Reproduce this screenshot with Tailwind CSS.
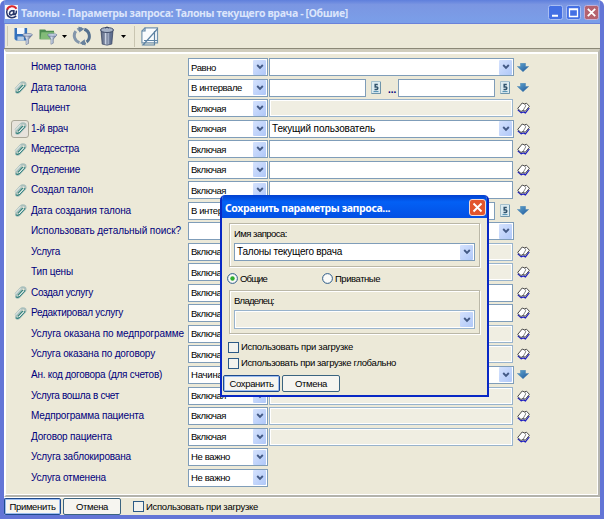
<!DOCTYPE html>
<html lang="ru">
<head>
<meta charset="utf-8">
<title>Талоны</title>
<script src="https://cdn.jsdelivr.net/npm/@tailwindcss/browser@4"></script>
</head>
<body class="w-[604px] h-[519px] overflow-hidden bg-white font-['Liberation_Sans',Arial,sans-serif] text-[9.5px] leading-none text-black">
<svg width="0" height="0" class="absolute">
  <defs>
    <linearGradient id="steel" x1="0" x2="1" y1="0" y2="0"><stop offset="0" stop-color="#3c4a68"/><stop offset=".4" stop-color="#d3dbea"/><stop offset="1" stop-color="#3e5078"/></linearGradient>
    <linearGradient id="down" x1="0" x2="1" y1="0" y2="1"><stop offset="0" stop-color="#5fa6cf"/><stop offset="1" stop-color="#22589c"/></linearGradient>
    <symbol id="chev" viewBox="0 0 7 6"><path d="M.7 1 3.5 3.8 6.3 1" fill="none" stroke="#435a85" stroke-width="1.9"/></symbol>
    <symbol id="arrow" viewBox="0 0 12 9"><path d="M3.5.3h5v3.2h3.2L6 8.8.3 3.5h3.2z" fill="url(#down)" stroke="#3a78ae" stroke-width=".4"/></symbol>
    <symbol id="book" viewBox="0 0 13 12">
      <path d="M.8 7.800 4.200 10.900 6.300 9.900 8.400 10.900 12.300 6" fill="none" stroke="#2020c0" stroke-width="1.200"/>
      <path d="M.7 6.500 5.200 1 7.500 1.900 9.500 1.200 12.400 4.300 8.200 9.300 6.200 8.300 4 9.500z" fill="#fff" stroke="#3a3a3a" stroke-width=".9"/>
      <path d="M7.500 1.900 8.800 3.800 6.200 8.300" fill="none" stroke="#666" stroke-width=".8"/>
    </symbol>
    <symbol id="cal" viewBox="0 0 10 13">
      <path d="M.5.5h9v12h-9z" fill="#dcebf0" stroke="#a5c0cc"/>
      <path d="M.5 12.500h9V1" fill="none" stroke="#6e94aa"/>
      <path d="M6.800 3.400H4.200v2.500h1.700c1.200 0 1.200 2.600-.2 2.600H3.500" fill="none" stroke="#31536c" stroke-width="1.500"/>
      <path d="M2.500 10.600h5" stroke="#4d8eb0" stroke-width="1"/>
    </symbol>
    <symbol id="clip" viewBox="0 0 12 12">
      <path d="M1.200 7.600 6.300 2.100C8 .3 11.400 1.600 10.400 4L5 10C3.500 11.600.9 10.400 2.300 8.400L7.200 3.200" fill="none" stroke="#a9bfbc" stroke-width="2"/>
      <path d="M1.800 9.800c1 1.200 2.400.8 3.300-.2L10.300 4.100M3.600 8.600 8.300 3.600" fill="none" stroke="#31827c" stroke-width="1.100"/>
      <path d="M1.500 7.300 6.400 2.200M4.700 9.200 9 4.600" fill="none" stroke="#fff" stroke-width=".8"/>
    </symbol>
    <symbol id="funnel" viewBox="0 0 11 13">
      <path d="M.5 1.800 4 6.600v5.600l2.600-1.300V6.600l3.900-4.800z" fill="url(#steel)" stroke="#53648a" stroke-width=".5"/>
      <ellipse cx="5.500" cy="1.900" rx="5" ry="1.500" fill="#c5d0e2" stroke="#5c6c94" stroke-width=".6"/>
    </symbol>
  </defs>
</svg>

<div class="relative flex flex-col w-[604px] h-[519px] rounded-t-[6px] overflow-hidden bg-[#ece9d8] border-x-4 border-b-4 border-[#6375d6] shadow-[inset_1px_0_0_#8796e0]">
  <header class="-mx-1 flex h-6 shrink-0 items-center bg-linear-to-b from-[#5f7fdc] via-[#7b96e2] via-20% to-[#7a9fe9] border-b border-[#6a82da] pl-[5px] pr-[5px]">
    <svg width="13" height="14" viewBox="0 0 13 14"><path d="M0 0h13v14H0z" fill="#f7f8fc"/><path d="M2 4.800C3.500.5 9-.2 11.500 3.800" fill="none" stroke="#d9262c" stroke-width="2"/><path d="M2.300 4.500C.5 8 2.500 12.800 7 12.700c2 0 3.200-.8 4.200-1.800M4.500 8.600c.2-3 4-4 4.200-1.300.2 2.600-4 4-4.200 1.300zM8.900 5v4.600c2.200 0 2.600-2 2.400-4" fill="none" stroke="#263569" stroke-width="1.500"/></svg>
    <h1 data-w="327" data-font="bold 10.5px 'Noto Sans'" class="ml-[3px] whitespace-nowrap font-['Noto_Sans',sans-serif] text-[10.5px] leading-none font-bold text-[#dce5fb] mt-[3px]">Талоны - Параметры запроса: Талоны текущего врача - [Обшие]</h1>
    <div class="ml-auto mt-[2px] flex gap-[3px]">
      <svg width="15" height="15" viewBox="0 0 15 15"><rect x=".5" y=".5" width="14" height="14" rx="2" fill="#4470e4" stroke="#a9bef3"/><path d="M4 10.700h6" stroke="#fff" stroke-width="2"/></svg>
      <svg width="15" height="15" viewBox="0 0 15 15"><rect x=".5" y=".5" width="14" height="14" rx="2" fill="#4470e4" stroke="#a9bef3"/><path d="M3.500 4h8v7.500h-8zM3.500 4.700h8" fill="none" stroke="#fff" stroke-width="1.300"/></svg>
      <svg width="15" height="15" viewBox="0 0 15 15"><rect x=".5" y=".5" width="14" height="14" rx="2" fill="#b5626f" stroke="#c3aed6"/><path d="m3.800 3.800 7.400 7.400m0-7.400-7.400 7.400" stroke="#fff" stroke-width="1.800"/></svg>
    </div>
  </header>

  <nav class="flex h-[25px] shrink-0 items-center border-b border-[#8b8877] pl-[3px]">
    <div class="h-5 w-px bg-[#cdc9b5]"></div>
    <svg class="ml-[6px]" width="19" height="19" viewBox="0 0 19 19"><path d="M.5 1h12.600v12.500H2L.5 12z" fill="#3472bd"/><path d="M3 1h7.500v6H3z" fill="#f3f7fc"/><path d="M3.400 9.500h6.500v4H3.400z" fill="#b7cbe3"/><use href="#funnel" x="8" y="6" width="11" height="12.500"/></svg>
    <svg class="ml-[6px]" width="19" height="19" viewBox="0 0 20 19"><path d="M.5 12.500V2h6l1 1.500h8.300v9z" fill="#4c8b51"/><path d="m1.500 12.500 1-7.500h13.800l-1.500 7.500z" fill="#82bb78"/><use href="#funnel" x="8" y="6" width="12" height="12.500"/></svg>
    <svg class="ml-[4px]" width="5" height="3"><path d="M0 0h5L2.500 3z"/></svg>
    <svg class="ml-[5px]" width="20" height="20" viewBox="0 0 20 20"><path d="M7.500 16.600A7.300 7.300 0 0 1 3.800 5.200M5.500 3.800A7.300 7.300 0 0 1 10 2.700" fill="none" stroke="#8396ab" stroke-width="3"/><path d="M12.300 3.300A7.300 7.300 0 0 1 14.600 16M13.500 16.700A7.300 7.300 0 0 1 10 17.300" fill="none" stroke="#55718f" stroke-width="3"/><path d="M6.500.5 12.500 2.800 7.300 6.600zM13.500 19.500 7.500 17.200l5.200-4z" fill="#6a829d"/></svg>
    <svg class="ml-[8px]" width="14" height="20" viewBox="0 0 14 20"><path d="M1 4.500h12l-1.200 13.600Q7 20.200 2.200 18.100z" fill="url(#steel)" stroke="#35415e" stroke-width=".7"/><path d="M4 6v12M7 6.500v12M10 6v12" stroke="#4b5977" stroke-width=".8"/><ellipse cx="7" cy="4" rx="6.500" ry="2.500" fill="#a7b3c7" stroke="#35425f" stroke-width=".9"/><path d="M5 2.200Q7-.4 9 2.200" fill="none" stroke="#35425f"/></svg>
    <svg class="ml-[7px]" width="5" height="3"><path d="M0 0h5L2.500 3z"/></svg>
    <div class="ml-[8px] h-[21px] w-px bg-[#c9c5b1]"></div>
    <svg class="ml-[6px]" width="18" height="19" viewBox="0 0 18 19"><path d="M4 .8h12.500v15H.9V4z" fill="#f8fbfd" stroke="#7393ad" stroke-width="1.200"/><path d="M4 .8V4H.9M2 18 16.800 1.500M3 13.500h13.500M13.500 4v14.500M.8 18h13" fill="none" stroke="#5d83a3" stroke-width="1.200"/></svg>
  </nav>

  <main class="flex h-[448px] shrink-0 flex-col border-l-2 border-t-[3px] border-l-white border-t-[#d0cdbd] border-r-2 border-r-[#b5b5b0] border-b-2 border-b-[#b3b3ac]">
    <div class="h-full border-t-2 border-r border-b border-white pt-[3px]"><div id="rows" class="flex flex-col"></div></div>
  </main>

  <footer class="flex flex-1 items-center border-t border-white">
    <button class="flex h-[17px] w-[57px] items-center justify-center rounded-[2px] border border-[#1d4a8c] bg-[#f6f5f0] shadow-[inset_0_0_0_1px_#9dbdf0]"><span data-w="46">Применить</span></button>
    <button class="ml-[2px] flex h-[17px] w-[58px] items-center justify-center rounded-[2px] border border-[#3b6480] bg-[#f6f5f0]"><span data-w="32">Отмена</span></button>
    <span class="ml-[12px] h-[11px] w-[11px] border border-[#2c5a86] bg-[#f2f2ee]"></span>
    <span class="ml-[2px]" data-w="112">Использовать при загрузке</span>
  </footer>
</div>

<section class="absolute left-[220px] top-[195px] flex h-[202px] w-[269px] flex-col overflow-hidden rounded-t-[5px] border-x-2 border-b-2 border-[#0827c4] bg-[#ece9d8]">
  <header class="-mx-[2px] flex h-[23px] shrink-0 items-center justify-between bg-linear-to-b from-[#0340cf] via-[#0360f5] via-30% to-[#0450e4] pl-[5px] pr-[3px]">
    <h2 data-w="165" data-font="bold 10.5px 'Noto Sans'" class="whitespace-nowrap font-['Noto_Sans',sans-serif] text-[10.5px] leading-none font-bold text-white mt-[3px]">Сохранить параметры запроса...</h2>
    <svg class="mt-[2px]" width="17" height="17" viewBox="0 0 17 17"><rect x=".5" y=".5" width="16" height="16" rx="2.500" fill="#e2552d" stroke="#f4dcd5"/><path d="m4.500 4.500 8 8m0-8-8 8" stroke="#fff" stroke-width="1.900"/></svg>
  </header>
  <div class="ml-[7px] mt-[5px] h-[44px] w-[251px] shrink-0 border border-[#bab7a7] shadow-[inset_1px_1px_0_#fff,1px_1px_0_#fff] pl-[4px] pt-[5px]">
    <div class="h-[10px]"><span data-w="53">Имя запроса:</span></div>
    <div class="mt-[4px] flex h-[18px] w-[241px] items-center border border-[#7f9db9] bg-white pl-[2px] pr-px"><span class="text-[10px]" data-font="10px 'Liberation Sans'" data-w="105">Талоны текущего врача</span><span class="ml-auto flex h-[15px] w-[13px] items-center justify-center rounded-[1px] bg-linear-to-br from-[#d5e2fd] to-[#b0c8f8]"><svg width="8" height="6"><use href="#chev"/></svg></span></div>
  </div>
  <div class="flex h-[23px] shrink-0 items-center pl-[5px]">
    <svg width="11" height="11" viewBox="0 0 11 11"><circle cx="5.500" cy="5.500" r="4.900" fill="#fafaf8" stroke="#2c5a86"/><circle cx="5.500" cy="5.500" r="2.200" fill="#2fae2f"/></svg>
    <span class="ml-[2px] w-[82px]"><span data-w="27">Общие</span></span>
    <svg width="11" height="11" viewBox="0 0 11 11"><circle cx="5.500" cy="5.500" r="4.900" fill="#fafaf8" stroke="#2c5a86"/></svg>
    <span class="ml-[2px]" data-w="45">Приватные</span>
  </div>
  <div class="ml-[7px] h-[44px] w-[251px] shrink-0 border border-[#bab7a7] shadow-[inset_1px_1px_0_#fff,1px_1px_0_#fff] pl-[4px] pt-[5px]">
    <div class="h-[10px]"><span data-w="40">Владелец:</span></div>
    <div class="mt-[4px] flex h-[19px] w-[241px] items-center border border-[#98b3cc] bg-[#f0eee2] pr-px shadow-[inset_0_0_0_1px_#fff]"><span class="ml-auto flex h-[15px] w-[13px] items-center justify-center rounded-[1px] bg-linear-to-br from-[#d5e2fd] to-[#b0c8f8]"><svg width="8" height="6"><use href="#chev"/></svg></span></div>
  </div>
  <div class="ml-[6px] mt-[7px] flex h-[12px] shrink-0 items-center gap-[2px]"><span class="h-[11px] w-[11px] border border-[#2c5a86] bg-[#f2f2ee]"></span><span data-w="112">Использовать при загрузке</span></div>
  <div class="ml-[6px] mt-[4px] flex h-[12px] shrink-0 items-center gap-[2px]"><span class="h-[11px] w-[11px] border border-[#2c5a86] bg-[#f2f2ee]"></span><span data-w="155">Использовать при загрузке глобально</span></div>
  <div class="mt-[6px] flex shrink-0 gap-[2px] pl-px">
    <button class="flex h-[17px] w-[57px] items-center justify-center rounded-[2px] border border-[#1d4a8c] bg-[#f6f5f0] shadow-[inset_0_0_0_1px_#9dbdf0]"><span data-w="44">Сохранить</span></button>
    <button class="flex h-[17px] w-[58px] items-center justify-center rounded-[2px] border border-[#3b6480] bg-[#f6f5f0]"><span data-w="32">Отмена</span></button>
  </div>
</section>

<script>
// [label, label width, condition, field type, icon, clip state]
const rows = [
  ['Номер талона', 65, 'Равно', 'combo', 'arrow', 0],
  ['Дата талона', 55, 'В интервале', 'range', 'arrow', 1],
  ['Пациент', 39, 'Включая', 'off', 'book', 0],
  ['1-й врач', 37, 'Включая', 'combo', 'book', 2, 'Текущий пользователь'],
  ['Медсестра', 48, 'Включая', 'text', 'book', 1],
  ['Отделение', 49, 'Включая', 'text', 'book', 1],
  ['Создал талон', 62, 'Включая', 'text', 'book', 1],
  ['Дата создания талона', 100, 'В интервале', 'range', 'arrow', 1],
  ['Использовать детальный поиск?', 150, '', 'wide', '', 0],
  ['Услуга', 29, 'Включая', 'off', 'book', 0],
  ['Тип цены', 42, 'Включая', 'off', 'book', 0],
  ['Создал услугу', 62, 'Включая', 'text', 'book', 1],
  ['Редактировал услугу', 92, 'Включая', 'text', 'book', 1],
  ['Услуга оказана по медпрограмме', 153, 'Включая', 'off', 'book', 0],
  ['Услуга оказана по договору', 124, 'Включая', 'off', 'book', 0],
  ['Ан. код договора (для счетов)', 131, 'Начинается', 'combo', 'arrow', 0],
  ['Услуга вошла в счет', 88, 'Включая', 'off', 'book', 0],
  ['Медпрограмма пациента', 113, 'Включая', 'off', 'book', 0],
  ['Договор пациента', 81, 'Включая', 'off', 'book', 0],
  ['Услуга заблокирована', 100, 'Не важно', '', '', 0],
  ['Услуга отменена', 75, 'Не важно', '', '', 0],
];
const condW = {'Равно': 25, 'В интервале': 51, 'Включая': 35, 'Начинается': 50, 'Не важно': 39};
const chev = '<span class="ml-auto flex h-[15px] w-[13px] shrink-0 items-center justify-center rounded-[1px] bg-linear-to-br from-[#d5e2fd] to-[#b0c8f8]"><svg width="8" height="6"><use href="#chev"/></svg></span>';
const use = (id, w, h) => `<svg width="${w}" height="${h}"><use href="#${id}"/></svg>`;
const cal = `<span class="ml-[5px] w-[10px]">${use('cal', 10, 13)}</span>`;
const fields = {
  combo: t => `<div class="ml-px flex h-[18px] w-[245px] items-center border border-[#7f9db9] bg-white pl-[2px] pr-px">${t ? `<span class="text-[10px]" data-font="10px 'Liberation Sans'" data-w="103">${t}</span>` : ''}${chev}</div>`,
  text: () => '<div class="ml-px h-[18px] w-[244px] border border-[#7f9db9] bg-white"></div>',
  off: () => '<div class="ml-px h-[18px] w-[244px] border border-[#98b3cc] bg-white p-px"><div class="h-full bg-[#f0eee2]"></div></div>',
  range: () => `<div class="ml-px h-[18px] w-[97px] border border-[#7f9db9] bg-white"></div>${cal}<span class="ml-[7px] mt-[5px] w-[10px] text-[10px] font-bold text-[#00007c]">...</span><div class="h-[18px] w-[97px] border border-[#7f9db9] bg-white"></div>${cal}`,
};
document.getElementById('rows').innerHTML = rows.map(([label, w, cond, type, icon, clip, text]) => `
  <div class="relative flex h-[20.530px] items-center">
    <div class="flex w-[25px] shrink-0 pl-[5px]">${clip ? `<span class="${clip === 2 ? 'flex h-[18px] w-[18px] items-center justify-center rounded-[3px] border border-[#aaa798] bg-[#e7e3dc]' : 'flex h-[18px] w-[18px] items-center justify-center'}">${use('clip', 13, 13)}</span>` : ''}</div>
    <div class="w-[157px] shrink-0 text-[10px] text-[#00007c]"><span data-font="10px 'Liberation Sans'" data-w="${w}">${label}</span></div>
    ${type === 'wide'
      ? `<div class="flex h-[18px] w-[326px] items-center border border-[#7f9db9] bg-white pr-px">${chev}</div>`
      : `<div class="flex h-[18px] w-[80px] shrink-0 items-center border border-[#7f9db9] bg-white pl-[2px] pr-px"><span data-w="${condW[cond]}">${cond}</span>${chev}</div>${type ? fields[type](text) : ''}`}
    ${icon ? `<span class="absolute left-[510.500px]">${icon === 'book' ? use('book', 13, 12) : `<span class="block pl-[0.500px]">${use('arrow', 12, 9)}</span>`}</span>` : ''}
  </div>`).join('');
// Track each caption so that it fills its nominal width.
const ctx = document.createElement('canvas').getContext('2d');
document.querySelectorAll('[data-w]').forEach(el => {
  el.classList.add('inline-block', 'whitespace-nowrap');
  ctx.font = el.dataset.font || "9.5px 'Liberation Sans'";
  const extra = (el.dataset.w - ctx.measureText(el.textContent).width) / el.textContent.length;
  el.style.letterSpacing = extra.toFixed(3) + 'px';
});
</script>
</body>
</html>
